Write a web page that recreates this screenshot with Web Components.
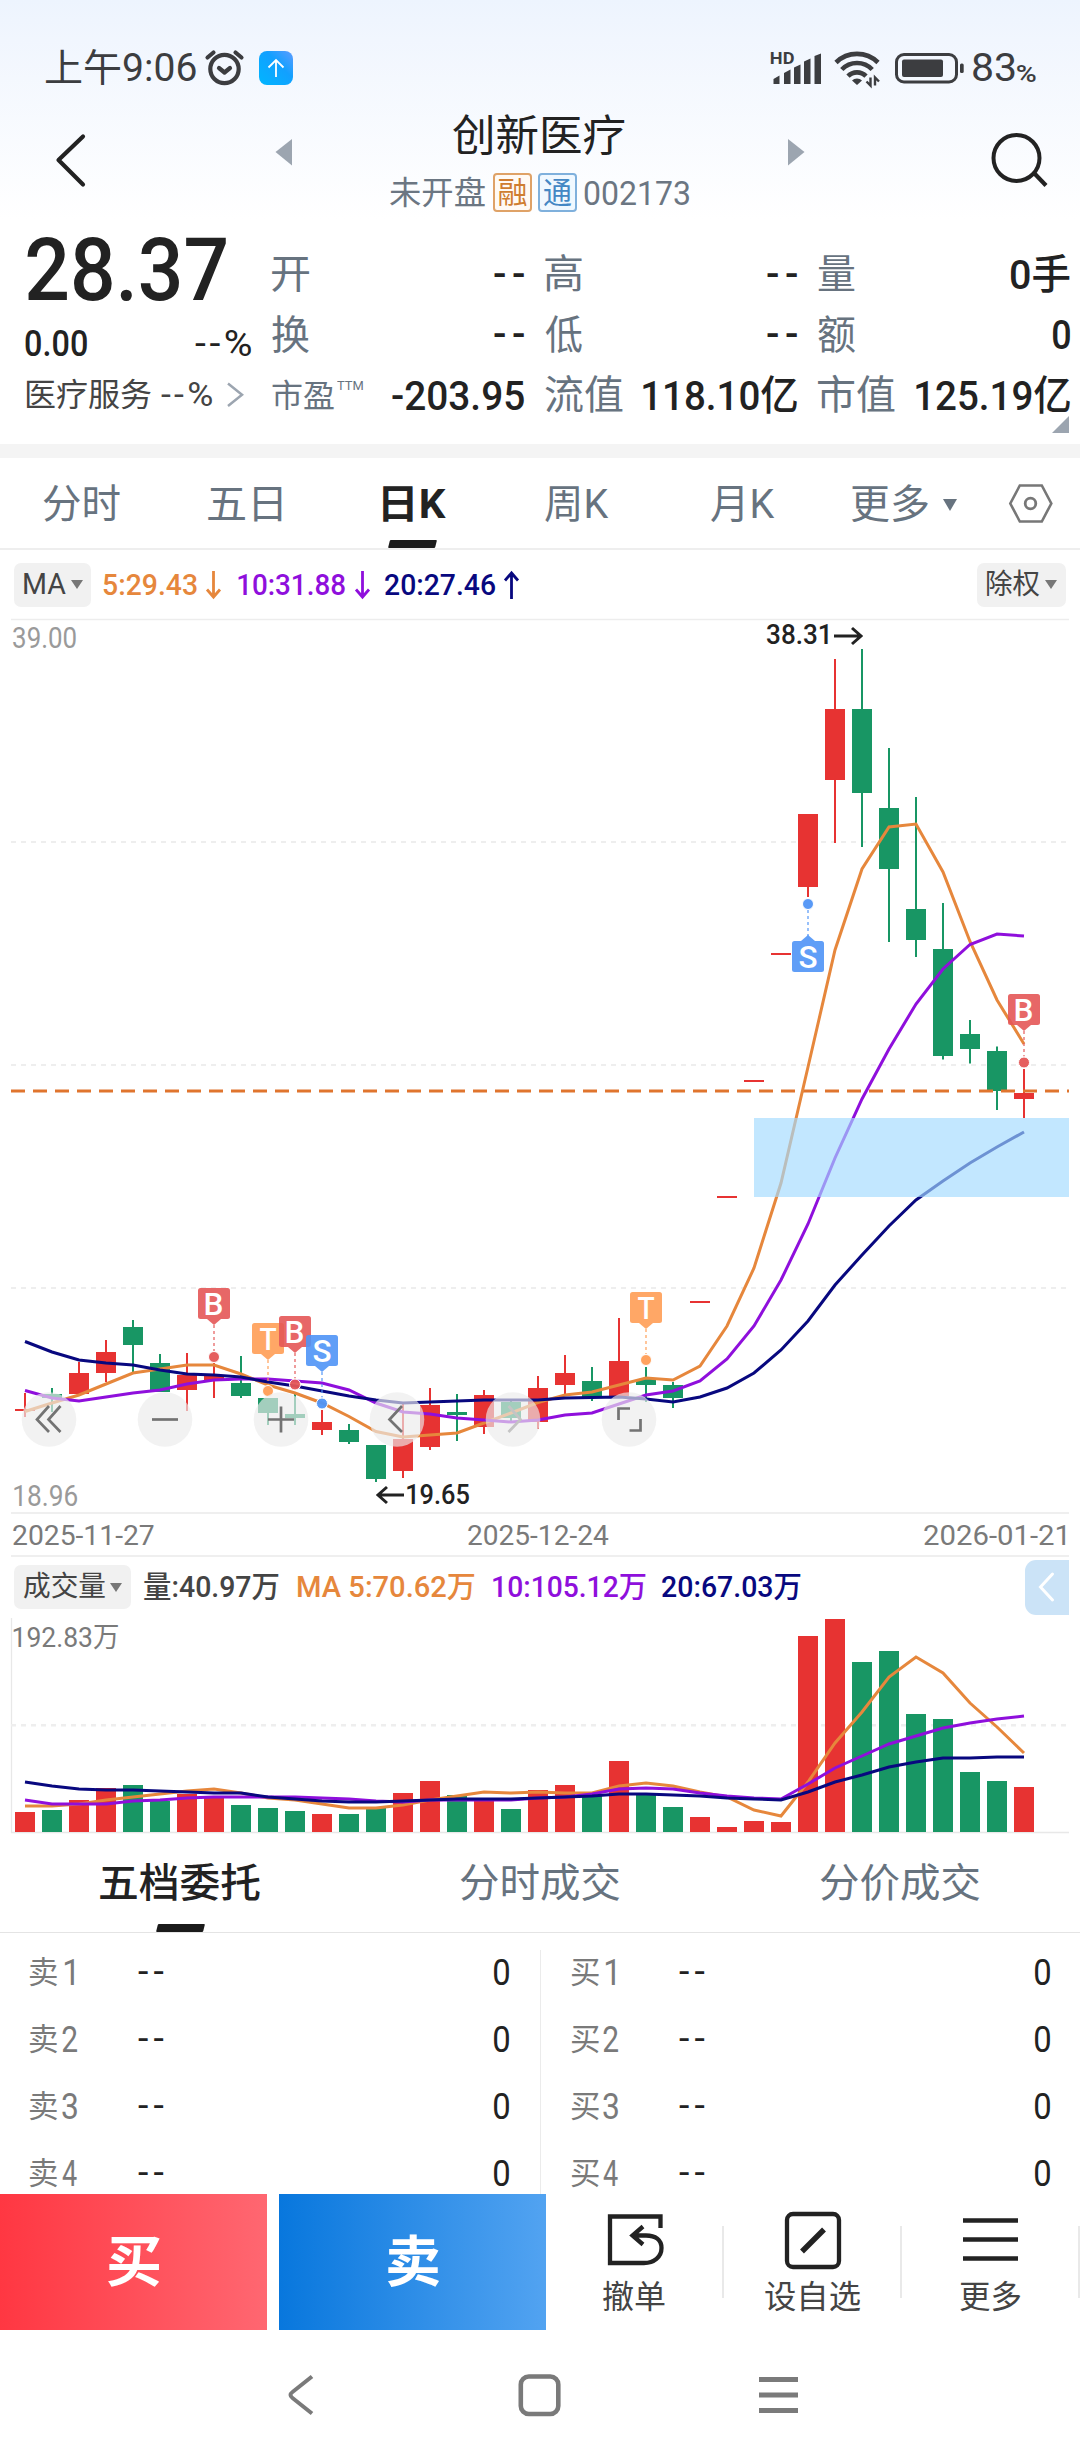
<!DOCTYPE html>
<html lang="zh-CN">
<head>
<meta charset="utf-8">
<title>创新医疗 002173</title>
<style>
html,body{margin:0;padding:0;background:#fff}
body{width:1080px;height:2460px;overflow:hidden;font-family:Roboto,"Noto Sans CJK SC",sans-serif}
</style>
</head>
<body>
<stock-app></stock-app>
<script>
const FONT = 'Roboto,"Noto Sans CJK SC",sans-serif';
const ctx = document.createElement('canvas').getContext('2d');
// Horizontal scale and offset that make a text's ink span exactly `width`.
function fit(text, width, size, weight, spacing = 0) {
  ctx.font = `${weight} ${size}px ${FONT}`;
  ctx.letterSpacing = '0px';
  const m = ctx.measureText(text);
  const k = width / (m.actualBoundingBoxLeft + m.actualBoundingBoxRight + spacing * (text.length - 1));
  return { k, dx: m.actualBoundingBoxLeft * k };
}
// Flow text of a fixed width.
const T = (text, w, size, color = '#222', weight = 400, style = '') =>
  `<fit-text w="${w}" size="${size}" weight="${weight}" style="color:${color};${style}">${text}</fit-text>`;
// Chart text: x is the ink's left edge, y the baseline.
const ST = (text, x, y, w, size, color, weight = 400) => {
  const f = fit(text, w, size, weight);
  return `<text transform="translate(${x + f.dx} ${y}) scale(${f.k} 1)" font-size="${size}" font-weight="${weight}" fill="${color}">${text}</text>`;
};
// Icon drawn in page coordinates.
const I = (x, y, w, h, body, style = '') =>
  `<svg width="${w}" height="${h}" viewBox="${x} ${y} ${w} ${h}" style="${style}" fill="none">${body}</svg>`;
const caret = (w, h, c, style = '') => `<svg width="${w}" height="${h}" viewBox="0 0 ${w} ${h}" style="${style}"><path d="M0 0H${w}L${w / 2} ${h}Z" fill="${c}"/></svg>`;

class Base extends HTMLElement {
  constructor() {
    super();
    this.attachShadow({ mode: 'open' }).innerHTML =
      `<style>:host{display:block;box-sizing:border-box}*{box-sizing:border-box}svg{display:block;flex:none;overflow:visible}${this.css()}</style>${this.html()}`;
  }
  css() { return ''; }
  html() { return '<slot></slot>'; }
}
const def = (name, css, html) => customElements.define(name, class extends Base {
  css() { return css; }
  html() { return typeof html === 'function' ? html() : html; }
});

customElements.define('fit-text', class extends HTMLElement {
  constructor() {
    super();
    this.attachShadow({ mode: 'open' }).innerHTML =
      '<style>:host{display:block;flex:none;white-space:nowrap}span{display:inline-block;transform-origin:0 50%}</style><span><slot></slot></span>';
  }
  connectedCallback() {
    const w = +this.getAttribute('w'), size = +this.getAttribute('size'), weight = this.getAttribute('weight');
    const spacing = this.textContent === '--' ? size * .14 : this.textContent === '--%' ? size * .09 : 0;
    const f = fit(this.textContent, w, size, weight, spacing);
    this.style.width = w + 'px';
    this.style.height = this.style.lineHeight = size + 'px';
    this.style.fontSize = size + 'px';
    this.style.fontWeight = weight;
    this.style.letterSpacing = spacing + 'px';
    this.shadowRoot.querySelector('span').style.transform = `translateX(${f.dx}px) scaleX(${f.k})`;
  }
});

def('status-bar', ':host{display:flex;height:104px;padding:32px 44px 0 45px;align-items:center}', () => {
  const g = '#3c3d40';
  return T('上午9:06', 151, 38, g, 400)
  + I(203, 48, 44, 40, `<g stroke="${g}" stroke-width="4.2" stroke-linecap="round" stroke-linejoin="round"><circle cx="224.5" cy="69" r="14.2"/><path d="M219 68l5.5 4.5 5.5-4.5M207.500 57.500l6-5M241.500 57.500l-6-5"/></g>`, 'margin-left:7px')
  + I(259, 51, 34, 34, `<defs><linearGradient id="b" x1="0" y1="1" x2="1" y2="0"><stop offset="0" stop-color="#00b6ff"/><stop offset=".6" stop-color="#12a0ff"/><stop offset="1" stop-color="#5e9cff"/></linearGradient></defs><rect x="259" y="51" width="34" height="34" rx="8" fill="url(#b)"/><path d="M276 77V60.500M268.500 67.500l7.500-7.500 7.500 7.500" stroke="#fff" stroke-width="1.8"/>`, 'margin-left:12px')
  + `<div style="flex:1"></div>`
  + I(768, 48, 58, 40, `${ST('HD', 771, 64, 23, 16, g, 700)}<path fill="${g}" d="M773.500 84v-5l6-3.500V84zM784 84V73l6.500-3.500V84zM794 84V67.500l6.500-3V84zM804 84V61.500l6.500-3V84zM814.500 84V56l6.500-2.500V84z"/>`)
  + I(832, 48, 52, 40, `<g stroke="${g}" stroke-width="4.6"><path d="M836 62.500a30 30 0 0 1 42 0M841.800 69.500a21 21 0 0 1 30.400 0M848 76.200a12.500 12.500 0 0 1 18 0"/></g><path d="M857 85l-5-4.500a7 7 0 0 1 10 0z" fill="${g}"/><path d="M870.500 77.500v8l-4-4M875 85.500v-8l4 4" stroke="${g}" stroke-width="2.400"/>`, 'margin-left:6px')
  + I(892, 50, 74, 36, `<rect x="896.500" y="54.500" width="60" height="27.500" rx="7.500" stroke="${g}" stroke-width="3"/><rect x="902" y="59.500" width="41" height="17.500" rx="2" fill="${g}"/><rect x="960" y="63.500" width="3.700" height="9.500" rx="1.500" fill="${g}"/>`, 'margin-left:8px')
  + T('83', 42, 39, g, 400, 'margin-left:7px') + T('%', 19, 24, g, 500, 'margin:11px 0 0 2px');
});

def('stock-nav', `:host{display:flex;height:116px;align-items:flex-start}
.t{width:300px;margin:10.5px 0 0 97px;display:flex;flex-direction:column;align-items:center;gap:15px}
.s{display:flex;align-items:center;width:300px;height:40px}
.tag{width:39px;height:39px;border:2px solid;border-radius:4px;display:flex;align-items:center;justify-content:center}`, () =>
  I(50, 130, 40, 60, '<path d="M83 136.500L58.500 160 83 184.500" stroke="#222" stroke-width="4.200" stroke-linecap="round" stroke-linejoin="round"/>', 'margin:26px 0 0 50px')
  + I(275, 139, 18, 27, '<path d="M292 139v26.500L275.500 152z" fill="#9ca5b0"/>', 'margin:35px 0 0 185px')
  + `<div class="t">${T('创新医疗', 172, 43, '#222', 400, 'margin-left:-1.500px')}
  <div class="s">${T('未开盘', 95, 32, '#6b7682')}
  <div class="tag" style="margin-left:8px;color:#dfa267;background:#fffaf5">${T('融', 28, 30, '#cf7d30')}</div>
  <div class="tag" style="margin-left:6px;color:#7fb0dc;background:#f0f8ff">${T('通', 28, 30, '#4487c4')}</div>
  ${T('002173', 105, 34, '#6b7682', 400, 'margin-left:7px')}</div></div>`
  + I(788, 139, 18, 27, '<path d="M788 139v26.500L804.500 152z" fill="#9ca5b0"/>', 'margin:35px 0 0 98px')
  + I(990, 130, 60, 60, '<circle cx="1016.500" cy="158" r="23" stroke="#222" stroke-width="4"/><path d="M1034 173l12 12.500" stroke="#222" stroke-width="4.200"/>', 'margin:26px 0 0 184px'));

def('quote-panel', `:host{display:flex;height:224px;position:relative}
.l{width:272px;padding:7px 0 0 24px}.r{display:flex;align-items:center}
.c{width:252px;margin-right:21px;padding-top:25px}.c:last-of-type{margin-right:0}
.q{display:flex;justify-content:space-between;align-items:center;height:60.5px}
.corner{position:absolute;left:1052px;top:196px}`, () => {
  const L = '#67737f', D = '#222';
  const q = (a, b) => `<div class="q">${a}${b}</div>`;
  const dash = T('--', 30.500, 41, D, 500, 'margin-top:-2px');
  const lab = (t, w = 37) => T(t, w, 40, L, 400);
  const v = (t, w) => T(t, w, 41, D, 500);
  return `<div class="l">${T('28.37', 199, 87, D, 500, 'margin-left:3px')}
  <div class="r" style="margin-top:12px">${T('0.00', 62, 36, D, 500, 'margin-left:1px')}${T('--%', 56, 36, D, 400, 'margin-left:108px')}</div>
  <div class="r" style="margin-top:16px">${T('医疗服务', 124, 32, '#444', 400, 'margin-left:3px')}${T('--%', 51, 33, '#444', 400, 'margin-left:10px')}${I(226, 382, 19, 26, '<path d="M228 383.500l14 11.200-14 11.200" stroke="#9ca5b0" stroke-width="2.500"/>', 'margin-left:14px')}</div></div>
  <div class="c">${q(lab('开'), dash)}${q(lab('换'), dash)}<div class="q"><div class="r">${T('市盈', 62, 32, L)}${T('TTM', 26, 13.500, L, 400, 'margin:-21px 0 0 3px')}</div>${v('-203.95', 132)}</div></div>
  <div class="c">${q(lab('高'), dash)}${q(lab('低'), dash)}${q(lab('流值', 78), v('118.10亿', 154))}</div>
  <div class="c">${q(lab('量'), v('0手', 59))}${q(lab('额'), v('0', 17.500))}${q(lab('市值', 77), v('125.19亿', 154))}</div>
  ${I(1052, 416, 17, 17, '<path d="M1069 416v17h-17z" fill="#9ca5b0"/>').replace('<svg', '<svg class="corner"')}`;
});

def('period-tabs', `:host{display:flex;height:106px;border-top:14px solid #f4f4f4;border-bottom:2px solid #eee;align-items:center;position:relative;padding-top:3px}
.u{position:absolute;left:389px;bottom:0;width:47px;height:8px;background:#1b1b1b;transform:skewX(-14deg);border-radius:1px}`, () => {
  const c = '#67737f';
  return T('分时', 77, 40, c, 400, 'margin-left:43px') + T('五日', 74, 40, c, 400, 'margin-left:88px') + T('日K', 63, 40, '#222', 700, 'margin-left:101px')
  + T('周K', 64, 40, c, 400, 'margin-left:99px') + T('月K', 64, 40, c, 400, 'margin-left:102px') + T('更多', 77, 40, c, 400, 'margin-left:76px')
  + caret(14, 12, c, 'margin-left:15px')
  + I(1007, 482, 48, 43, '<path d="M1019.800 485.500h22l9.500 18-9.500 18h-22l-9.500-18z" stroke="#777" stroke-width="2.600"/><circle cx="1030.500" cy="503.500" r="5.300" stroke="#777" stroke-width="2.800"/>', 'margin-left:50px;margin-top:-3px')
  + '<div class="u"></div>';
});

def('drop-chip', ':host{display:flex;align-items:center;gap:5px;height:44px;border-radius:7px;background:#f1f1f1;padding:0 8px 0 10px;flex:none}', () => `<slot></slot>${caret(12, 9, '#777')}`);

const OR = '#e6873c', PU = '#8f0fdc', NV = '#08087f';
const arrow = (c, up, ml) => `<svg width="15" height="28" viewBox="0 0 15 28" fill="none" style="margin-left:${ml}px" stroke="${c}" stroke-width="2.800"><path d="${up ? 'M7.500 28V2M1 9.500L7.500 2 14 9.500' : 'M7.500 0v26M1 18.500L7.500 26 14 18.500'}"/></svg>`;

def('ma-legend', ':host{display:flex;height:69px;align-items:center;padding:0 14px;margin-bottom:1px}', () =>
  `<drop-chip>${T('MA', 42, 29, '#444', 400)}</drop-chip>`
  + T('5:29.43', 94, 30, OR, 500, 'margin-left:12px') + arrow(OR, 0, 9)
  + T('10:31.88', 107, 30, PU, 500, 'margin-left:17px') + arrow(PU, 0, 10)
  + T('20:27.46', 110, 30, NV, 500, 'margin-left:15px') + arrow(NV, 1, 9)
  + `<div style="flex:1"></div><drop-chip style="width:89px">${T('除权', 53, 28, '#444')}</drop-chip>`);

const X = i => 25 + 27 * i;
const line = (ys, c) => `<polyline points="${ys.map((y, i) => X(i) + ',' + y).join(' ')}" fill="none" stroke="${c}" stroke-width="3"/>`;
const RED = '#e73332', GRN = '#189664';

// [colour, wick top, wick bottom, body top, body bottom]
const K = [['r',1393,1417,1409,1411],['g',1388,1412,1394,1398],['r',1362,1394,1373,1394],['r',1340,1382,1352,1373],['g',1320,1372,1327,1345],['g',1354,1392,1363,1392],['r',1353,1411,1375,1390],['r',1363,1398,1376,1381],['g',1356,1398,1383,1396],['g',1398,1425,1398,1413],['g',1392,1425,1414,1418],['r',1410,1435,1422,1430],['g',1424,1444,1430,1442],['g',1445,1482,1445,1479],['r',1403,1478,1439,1471],['r',1388,1450,1405,1447],['g',1394,1441,1412,1415],['r',1390,1434,1395,1427],['g',1400,1422,1402,1418],['r',1376,1429,1388,1422],['r',1355,1394,1373,1385],['g',1367,1401,1381,1397],['r',1318,1396,1361,1396],['g',1367,1402,1379,1385],['g',1382,1408,1385,1398],['r',1301,1303,1301,1303],['r',1196,1198,1196,1198],['r',1080,1082,1080,1082],['r',953,955,953,955],['r',814,897,814,887],['r',659,843,709,780],['g',649,847,709,793],['g',748,942,808,869],['g',797,957,909,940],['g',903,1059.5,949,1056],['g',1020,1063.5,1034,1049],['g',1046.5,1110,1051,1091],['r',1069,1118,1093,1099]];
const M5 = [1411.5,1403,1395,1384,1373,1369,1365,1365,1374,1385,1393,1403,1416.5,1431.5,1437,1435,1433,1423,1413,1402.5,1395,1392,1385,1378,1380,1366,1326,1268,1183,1067,950,869,827,824,872,941.5,1000,1044];
const M10 = [1390.5,1398,1401,1397,1393,1390,1384,1380,1379,1379,1381,1383,1390,1403,1412,1414,1418,1420,1422,1420,1415,1413,1404,1395,1391,1381,1359,1326,1280,1224,1158,1099,1049,1004,969,944.5,934,936];
const M20 = [1341.5,1352,1360,1363,1365,1370,1374,1375,1377,1382,1386,1391,1396,1400,1403,1402,1401,1400,1400,1400,1398,1397.5,1397,1399,1402,1397,1388,1373,1350,1321,1285,1255,1226,1200,1181,1163,1147,1132];

// Trade marker: square badge with a pointer and a dot on the candle.
function mark(i, letter, top, dot) {
  const x = X(i), below = dot < top, c = { B: '#e45656', T: '#ff9d55', S: '#4f93f6' }[letter];
  const y1 = below ? dot + 6 : top + 37, y2 = below ? top - 5 : dot - 6;
  const p = below ? `M${x - 7} ${top}l7-6 7 6z` : `M${x - 7} ${top + 31}l7 6 7-6z`;
  const w = 17;
  return `<path d="M${x} ${y1}V${y2}" stroke="${c}" stroke-opacity=".65" stroke-width="1.800" stroke-dasharray="3 3"/><circle cx="${x}" cy="${dot}" r="5.500" fill="${c}" fill-opacity=".95" stroke="#fff" stroke-width="1"/><g fill="${c}" fill-opacity=".9"><rect x="${x - 16}" y="${top}" width="32" height="31" rx="2.500"/><path d="${p}"/></g>` + ST(letter, x - w / 2, top + 26.5, w, 31.5, '#fff', 500);
}
const btn = (x, d, c = '#737373') => `<circle cx="${x}" cy="1419.500" r="27.300" fill="#ebebeb" fill-opacity=".66"/><path d="${d}" stroke="${c}" stroke-width="2.700" fill="none"/>`;

def('k-chart', ':host{height:893px}', () => {
  let s = '<svg width="1080" height="893" viewBox="0 620 1080 893"><path d="M11 619.500H1069" stroke="#ededed" stroke-width="1.500"/>';
  s += '<path d="M11 842H1069M11 1065H1069M11 1288H1069" stroke="#eee" stroke-width="2" stroke-dasharray="5 5"/>';
  s += ST('39.00', 13, 647.5, 63, 29, '#9a9a9a') + ST('18.96', 14, 1506, 63, 29, '#9a9a9a');
  s += K.map(([c, a, b, t, e], i) => { const f = c === 'r' ? RED : GRN; return `<rect x="${X(i) - 1}" y="${a}" width="2" height="${b - a}" fill="${f}"/><rect x="${X(i) - 10}" y="${t}" width="20" height="${e - t}" fill="${f}"/>`; }).join('');
  s += '<path d="M11 1091H1069" stroke="#e0752e" stroke-width="3" stroke-dasharray="14 8"/>';
  s += line(M5, OR) + line(M10, PU) + line(M20, NV);
  s += '<rect x="754" y="1118" width="315" height="79" fill="#a3daff" fill-opacity=".66"/>';
  s += ST('38.31', 767, 644, 61, 28, '#222', 500) + ST('19.65', 407, 1503.5, 62, 28, '#222', 500);
  s += '<g stroke="#222" stroke-width="3" fill="none"><path d="M834 636h26M852 628l9 8-9 8M404 1495h-26M387 1487l-9 8 9 8"/></g>';
  s += mark(7, 'B', 1288, 1357) + mark(9, 'T', 1323, 1391) + mark(10, 'B', 1316, 1384.5) + mark(11, 'S', 1335, 1403.5) + mark(23, 'T', 1292, 1360) + mark(29, 'S', 941, 904) + mark(37, 'B', 994, 1062.5);
  s += btn(49, 'M49 1406l-12 13.500 12 12.500M60.500 1406l-12 13.500 12 12.500') + btn(165, 'M152 1419.500h26') + btn(281, 'M268 1419.500h26M281 1406.500v26') + btn(397, 'M402 1406l-12.500 13.500 12.500 12.500') + btn(513, 'M508.500 1406l12 13.500-12 12.500', '#c4c4c4') + btn(629, 'M618.500 1420v-11.500h11.500M629.500 1430.500h11v-11.500');
  return s + '</svg>';
});

def('date-axis', ':host{display:flex;justify-content:space-between;align-items:center;height:45px;margin:-1px 11px 0;padding:3px 4px 0 1.5px;border-top:2px solid #efefef;border-bottom:2px solid #efefef}', () =>
  ['2025-11-27', '2025-12-24', '2026-01-21'].map(d => T(d, 141, 28, '#7a7a7a')).join(''));

def('volume-legend', ':host{display:flex;height:61px;align-items:center;padding:0 11px 1px 14px}.tab{width:44px;height:55px;background:#cbe3f7;border-radius:11px 0 0 11px;display:flex;align-items:center;justify-content:center}', () =>
  `<drop-chip style="width:117px">${T('成交量', 81, 28, '#444', 400)}</drop-chip>`
  + T('量:40.97万', 135, 30, '#444', 500, 'margin-left:13px') + T('MA 5:70.62万', 177, 30, OR, 500, 'margin-left:18.500px')
  + T('10:105.12万', 153, 30, PU, 500, 'margin-left:18.500px') + T('20:67.03万', 139, 30, NV, 500, 'margin-left:16px')
  + `<div style="flex:1"></div><div class="tab">${I(1038, 1572, 20, 32, '<path d="M1053.500 1575l-12 13 12 13" stroke="#fff" stroke-width="3" stroke-linecap="round"/>')}</div>`);

const V = 'r1812 g1810 r1800 r1788 g1785 g1801 r1794 r1797 g1805 g1808 g1811 r1814 g1814 g1808 r1793 r1781 g1795 r1800 g1809 r1790 r1785 g1796 r1761 g1795 g1807 r1817 r1827 r1821 r1822 r1636 r1619 g1662 g1651 g1714 g1719 g1772 g1781 r1787'.split(' ');
const V5 = [1806,1806,1804,1800,1797,1794,1791,1789,1793,1798,1800,1804,1808,1808,1805,1800,1796,1792,1793,1792,1793,1793,1786,1783,1786,1792,1797,1810,1816,1782,1743,1712,1677,1657,1673,1703,1727,1753];
const V10 = [1800,1804,1804,1804,1801,1800,1798,1797,1797,1797,1797,1798,1799,1801,1802,1800,1800,1800,1800,1798,1797,1794,1789,1788,1789,1793,1796,1798,1799,1784,1768,1756,1744,1736,1728,1723,1719,1716];
const V20 = [1782,1786,1789,1790,1790,1791,1792,1793,1793,1797,1799,1801,1802,1802,1801,1800,1799,1799,1799,1798,1797,1796,1794,1794,1795,1796,1798,1799,1800,1792,1782,1775,1767,1762,1758,1758,1757,1757];
def('volume-chart', ':host{height:217px}', () =>
  '<svg width="1080" height="217" viewBox="0 1618 1080 217"><path d="M11.500 1618V1832.500H1069" stroke="#e8e8e8" stroke-width="1.300" fill="none"/><path d="M11 1725.300H1069" stroke="#eee" stroke-width="2.500" stroke-dasharray="5 5"/>'
  + ST('192.83万', 13.5, 1647, 105, 28, '#7a7a7a')
  + V.map((v, i) => `<rect x="${X(i) - 10}" y="${v.slice(1)}" width="20" height="${1832 - v.slice(1)}" fill="${v[0] === 'r' ? RED : GRN}"/>`).join('')
  + line(V5, OR) + line(V10, PU) + line(V20, NV) + '</svg>');

def('book-tabs', `:host{display:grid;grid-template-columns:repeat(3,360px);justify-items:center;height:98px;border-bottom:1px solid #e4e4e4;position:relative;padding-top:29px}
.u{position:absolute;left:157px;bottom:0;width:47px;height:8px;background:#1b1b1b;transform:skewX(-14deg);border-radius:1px}`, () =>
  T('五档委托', 160, 40, '#222', 500) + T('分时成交', 160, 40, '#67737f', 400, 'margin-left:-1px') + T('分价成交', 160, 40, '#67737f', 400, 'margin-left:-1px') + '<div class="u"></div>');

def('order-book', `:host{display:flex;height:261px;overflow:hidden;padding-top:6px}
.c{width:540px;padding:0 30.5px 0 29px}.c+.d+.c{padding:0 29.5px 0 30.5px}
.r{display:flex;align-items:center;height:67px}
.d{width:1px;margin:11px -1px 0 0;background:#ebebeb}`, () => {
  const col = n => `<div class="c">${[1, 2, 3, 4].map(i => `<div class="r">${T(n, 28.5, 31, '#7a7a7a')}${T(i, i == 1 ? 9 : 15, 36, '#7a7a7a', 400, `margin-left:${i == 1 ? 7 : 4}px`)}${T('--', 26, 36, '#222', 400, `margin:-2px 0 0 ${i == 1 ? 64 : 61}px`)}<div style="flex:1"></div>${T('0', 15.500, 36)}</div>`).join('')}</div>`;
  return col('卖') + '<div class="d"></div>' + col('买');
});

def('trade-bar', `:host{display:flex;height:136px;background:#fff}
.b{width:267px;display:flex;align-items:center;justify-content:center;margin-right:12px}
.a{width:178px;display:flex;flex-direction:column;align-items:center;position:relative}
.a::after{content:"";position:absolute;right:0;top:32px;width:2px;height:72px;background:#e9e9e9}
.i{height:83px;display:flex;align-items:center}`, () => {
  const c = '#444';
  const a = (ic, t, w) => `<div class="a"><div class="i" style="padding-top:8px">${ic}</div>${T(t, w, 32, c, 400, 'margin:4px 0 0 -1.500px')}</div>`;
  return `<div class="b" style="background:linear-gradient(90deg,#ff3742,#ff6771)">${T('买', 52, 55, '#fff', 700)}</div>
  <div class="b" style="background:linear-gradient(90deg,#0877dd,#52a3f1);margin-right:0">${T('卖', 52, 55, '#fff', 700)}</div>`
  + a(I(607, 2211, 60, 57, '<path d="M662.500 2228v-11.500h-50.500v46.500h34c10 0 17.500-6 17.500-15 0-8-6-12.500-15.500-12.500H635M645 2226.500l-10.500 9 10.500 9" stroke="#222" stroke-width="4.300"/>'), '撤单', 62)
  + a(I(784, 2209, 58, 60, '<rect x="787" y="2213" width="52" height="53" rx="6" stroke="#222" stroke-width="4.300"/><path d="M802 2250.500l22-22" stroke="#222" stroke-width="5.500"/>'), '设自选', 95)
  + a(I(961, 2211, 58, 57, '<path d="M962 2220.500h55M962 2239.500h55M962 2258.500h55" stroke="#222" stroke-width="4.600"/>'), '更多', 61);
});

def('system-nav', ':host{display:flex;height:130px;align-items:center;padding-left:286px}', () =>
  I(286, 2372, 30, 46, '<path d="M312 2376.500L292.500 2392q-4 3 0 6L312 2413.500" stroke="#7a7a7a" stroke-width="4"/>')
  + I(516, 2372, 47, 47, '<rect x="520.800" y="2376.500" width="37.500" height="37.500" rx="8" stroke="#7a7a7a" stroke-width="4.600"/>', 'margin-left:200px')
  + I(757, 2372, 43, 46, '<path d="M759 2379.500h39M759 2395h39M759 2410.500h39" stroke="#7a7a7a" stroke-width="4.800"/>', 'margin-left:194px'));

def('stock-app', ':host{width:1080px;height:2460px;overflow:hidden;background:linear-gradient(#edf4fe,#f1f6fe 40px,#fff 220px)}',
  ['status-bar', 'stock-nav', 'quote-panel', 'period-tabs', 'ma-legend', 'k-chart', 'date-axis', 'volume-legend', 'volume-chart', 'book-tabs', 'order-book', 'trade-bar', 'system-nav'].map(n => `<${n}></${n}>`).join(''));
</script>
</body>
</html>
